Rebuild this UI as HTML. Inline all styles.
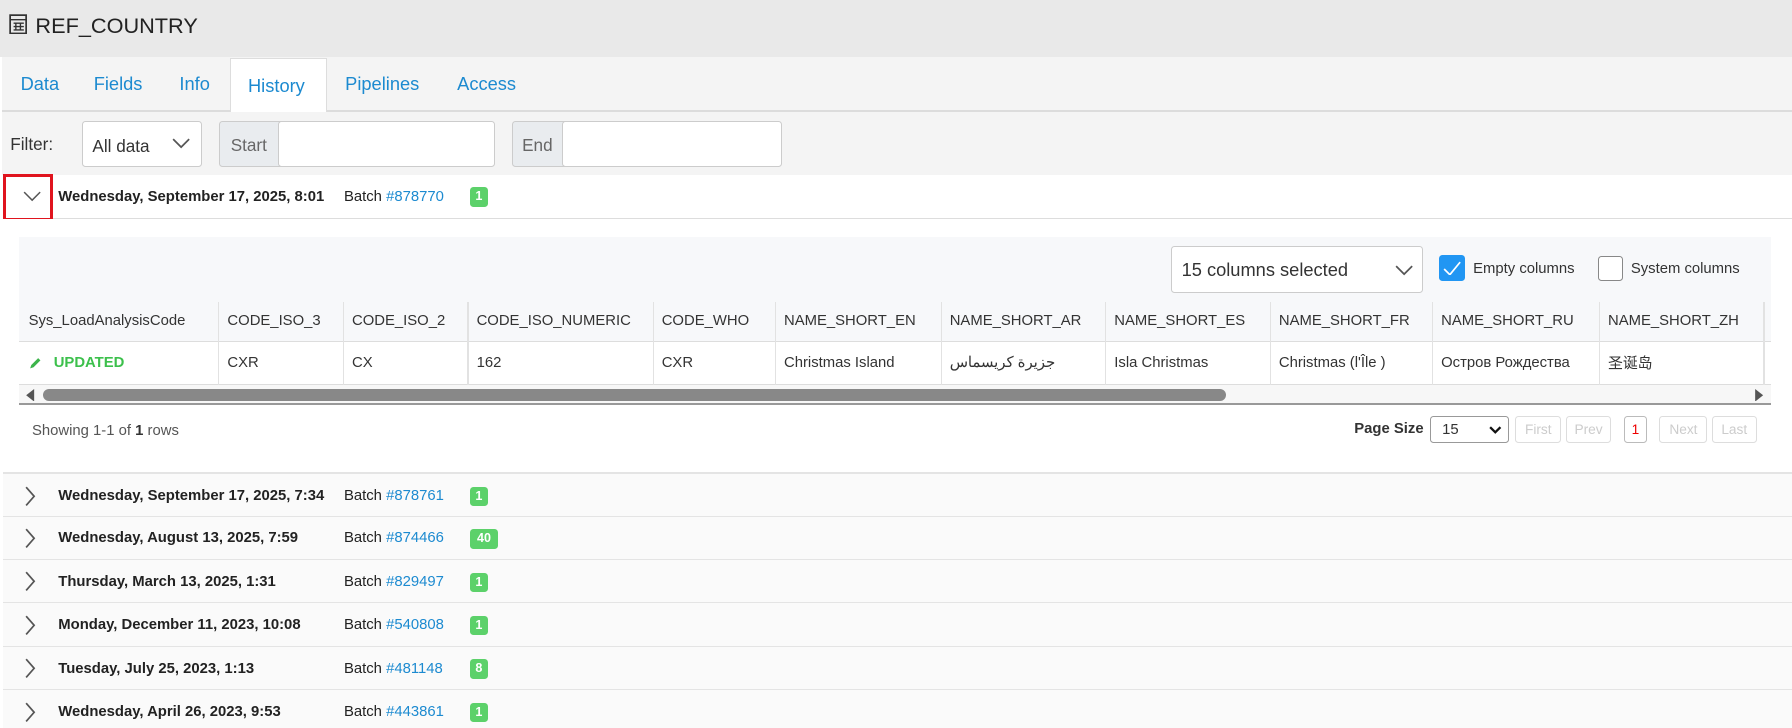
<!DOCTYPE html>
<html><head><meta charset="utf-8"><style>
*{box-sizing:border-box;margin:0;padding:0}
html,body{width:1792px;height:728px;overflow:hidden;background:#fff}
#w{zoom:1.142857;width:1568px;height:637px;position:relative;font-family:"Liberation Sans","Noto Sans CJK SC",sans-serif;color:#333;font-size:13px}
.a{position:absolute}
.tab{position:absolute;top:64px;font-size:16px;color:#1c8ad0}
.box{position:absolute;border:1px solid #ccc;border-radius:3px;background:#fff}
.th,.td{position:absolute;font-size:13px;color:#333;white-space:nowrap}
.vl{position:absolute;width:1px;background:#e2e2e2}
.row{position:absolute;left:3px;width:1565px;height:38px;background:#fafafa;border-bottom:1px solid #e4e4e4}
.row .d{position:absolute;left:48px;top:12px;font-weight:bold;font-size:13px;color:#222}
.row .b{position:absolute;left:298px;top:12px;font-size:13px;color:#222}
.b span{color:#1c8ad0}
.badge{position:absolute;top:11px;height:17px;background:#5cd16a;color:#fff;font-weight:bold;font-size:11px;border-radius:3px;text-align:center;line-height:17px}
.pb{position:absolute;top:364px;height:24px;border:1px solid #ddd;border-radius:3px;color:#ccc;font-size:12px;line-height:22px;text-align:center}
</style></head><body><div id="w">
<div class="a" style="left:0;top:0;width:1568px;height:50px;background:#e9e9e9"></div>
<svg class="a" style="left:8px;top:12px" width="17" height="18" viewBox="0 0 17 18"><rect x="1" y="1" width="14" height="16" fill="none" stroke="#333" stroke-width="1.5"/><path d="M1 5h14M4 8h9M4 11h9M4 14h9M6 8v6M10 8v6" stroke="#333" stroke-width="1.2"/></svg>
<div class="a" style="left:31px;top:11px;font-size:19px;color:#222">REF_COUNTRY</div>
<div class="a" style="left:2px;top:50px;width:1566px;height:103px;background:#f4f4f4"></div>
<div class="a" style="left:2px;top:96px;width:1566px;height:2px;background:#dcdcdc"></div>
<div class="a" style="left:201px;top:51px;width:85px;height:47px;background:#fff;border:1px solid #ddd;border-bottom:none"></div>
<div class="tab" style="left:18px">Data</div><div class="tab" style="left:82px">Fields</div><div class="tab" style="left:157px">Info</div>
<div class="tab" style="left:217px;top:66px">History</div><div class="tab" style="left:302px">Pipelines</div><div class="tab" style="left:400px">Access</div>
<div class="a" style="left:9px;top:117px;font-size:15px;color:#333">Filter:</div>
<div class="box" style="left:72px;top:106px;width:105px;height:40px"><span class="a" style="left:8px;top:12px;font-size:15px">All data</span><svg class="a" style="left:78px;top:14px" width="16" height="10"><path d="M1 1l7 7 7-7" fill="none" stroke="#555" stroke-width="1.5"/></svg></div>
<div class="box" style="left:192px;top:106px;width:240px;height:40px;background:#e9ecef"><span class="a" style="left:9px;top:11px;font-size:15px;color:#666">Start</span><div class="box" style="left:50px;top:-1px;width:190px;height:40px"></div></div>
<div class="box" style="left:448px;top:106px;width:235px;height:40px;background:#e9ecef"><span class="a" style="left:8px;top:11px;font-size:15px;color:#666">End</span><div class="box" style="left:43px;top:-1px;width:192px;height:40px"></div></div>
<div class="a" style="left:3px;top:153px;width:1565px;height:39px;background:#fff;border-bottom:1px solid #ddd"></div>
<div class="a" style="left:3px;top:152px;width:43px;height:41px;border:3px solid #e0141e"></div>
<svg class="a" style="left:20px;top:167px" width="16" height="10"><path d="M1 1l7 7 7-7" fill="none" stroke="#555" stroke-width="1.3"/></svg>
<div class="a" style="left:51px;top:165px;font-weight:bold;color:#222">Wednesday, September 17, 2025, 8:01</div>
<div class="a" style="left:301px;top:165px;color:#222">Batch <span style="color:#1c8ad0">#878770</span></div>
<div class="badge" style="left:411px;top:164px;width:16px">1</div>
<div class="a" style="left:3px;top:192px;width:1565px;height:222px;background:#fff;border-bottom:1px solid #e4e4e4"></div>
<div class="a" style="left:17px;top:207px;width:1533px;height:92px;background:#f7f8fa;border-bottom:1px solid #ddd"></div>
<div class="box" style="left:1025px;top:215px;width:220px;height:41px"><span class="a" style="left:8px;top:11px;font-size:16px;color:#333">15 columns selected</span><svg class="a" style="left:195px;top:16px" width="16" height="10"><path d="M1 1l7 7 7-7" fill="none" stroke="#555" stroke-width="1.5"/></svg></div>
<div class="a" style="left:1259px;top:223px;width:23px;height:23px;background:#2196f3;border-radius:3px"></div>
<svg class="a" style="left:1263px;top:228px" width="16" height="13"><path d="M1 7l5 5 9-11" fill="none" stroke="#fff" stroke-width="1.5"/></svg>
<div class="a" style="left:1289px;top:228px;font-size:13px">Empty columns</div>
<div class="a" style="left:1398px;top:224px;width:22px;height:22px;border:1px solid #888;border-radius:3px;background:#fff"></div>
<div class="a" style="left:1427px;top:228px;font-size:13px">System columns</div>
<div class="a" style="left:17px;top:299px;width:1533px;height:38px;border-bottom:1px solid #ddd"></div>
<div class="vl" style="left:191px;top:264px;height:73px"></div><div class="vl" style="left:300px;top:264px;height:73px"></div><div class="vl" style="left:409px;top:264px;height:73px"></div><div class="vl" style="left:571px;top:264px;height:73px"></div><div class="vl" style="left:678px;top:264px;height:73px"></div><div class="vl" style="left:823px;top:264px;height:73px"></div><div class="vl" style="left:967px;top:264px;height:73px"></div><div class="vl" style="left:1111px;top:264px;height:73px"></div><div class="vl" style="left:1253px;top:264px;height:73px"></div><div class="vl" style="left:1399px;top:264px;height:73px"></div><div class="vl" style="left:1543px;top:264px;height:73px"></div>
<div class="th" style="left:25px;top:274px">Sys_LoadAnalysisCode</div><div class="th" style="left:199px;top:274px">CODE_ISO_3</div><div class="th" style="left:308px;top:274px">CODE_ISO_2</div><div class="th" style="left:417px;top:274px">CODE_ISO_NUMERIC</div><div class="th" style="left:579px;top:274px">CODE_WHO</div><div class="th" style="left:686px;top:274px">NAME_SHORT_EN</div><div class="th" style="left:831px;top:274px">NAME_SHORT_AR</div><div class="th" style="left:975px;top:274px">NAME_SHORT_ES</div><div class="th" style="left:1119px;top:274px">NAME_SHORT_FR</div><div class="th" style="left:1261px;top:274px">NAME_SHORT_RU</div><div class="th" style="left:1407px;top:274px">NAME_SHORT_ZH</div>
<svg class="a" style="left:25px;top:312px" width="11" height="11"><path d="M1 10l1-3 6-6 2 2-6 6z" fill="#3cb44b"/></svg>
<div class="td" style="left:47px;top:311px;color:#3cc04c;font-weight:bold">UPDATED</div>
<div class="td" style="left:199px;top:311px">CXR</div><div class="td" style="left:308px;top:311px">CX</div><div class="td" style="left:417px;top:311px">162</div><div class="td" style="left:579px;top:311px">CXR</div><div class="td" style="left:686px;top:311px">Christmas Island</div><div class="td" style="left:831px;top:309px">جزيرة كريسماس</div><div class="td" style="left:975px;top:311px">Isla Christmas</div><div class="td" style="left:1119px;top:311px">Christmas (l'Île )</div><div class="td" style="left:1261px;top:311px">Остров Рождества</div><div class="td" style="left:1407px;top:308px">圣诞岛</div>
<div class="a" style="left:17px;top:337px;width:1533px;height:17px;background:#f7f7f7;border-bottom:2px solid #999"></div>
<svg class="a" style="left:22px;top:340px" width="10" height="11"><path d="M8 0v11L1 5.5z" fill="#555"/></svg>
<svg class="a" style="left:1535px;top:340px" width="10" height="11"><path d="M1 0v11l7-5.5z" fill="#555"/></svg>
<div class="a" style="left:38px;top:340px;width:1035px;height:11px;background:#888;border-radius:6px"></div>
<div class="a" style="left:28px;top:370px;font-size:13px;color:#555">Showing 1-1 of <b style="color:#333">1</b> rows</div>
<div class="a" style="left:1185px;top:368px;font-weight:bold;color:#333">Page Size</div>
<div class="box" style="left:1251px;top:364px;width:69px;height:24px;border-color:#999"><span class="a" style="left:10px;top:4px">15</span><svg class="a" style="left:51px;top:8px" width="11" height="8"><path d="M1 1l4.5 4.5L10 1" fill="none" stroke="#111" stroke-width="2"/></svg></div>
<div class="pb" style="left:1326px;width:40px">First</div><div class="pb" style="left:1370px;width:40px">Prev</div><div class="pb" style="left:1421px;width:20px;color:#e00;border-color:#bbb">1</div><div class="pb" style="left:1452px;width:42px">Next</div><div class="pb" style="left:1498px;width:39px">Last</div>
<div class="row" style="top:414px;border-top:1px solid #e4e4e4"><svg class="a" style="left:19px;top:10px" width="10" height="18"><path d="M1 1l7 8-7 8" fill="none" stroke="#555" stroke-width="1.5"/></svg><div class="d">Wednesday, September 17, 2025, 7:34</div><div class="b">Batch <span>#878761</span></div><div class="badge" style="left:408px;width:16px">1</div></div>
<div class="row" style="top:452px"><svg class="a" style="left:19px;top:10px" width="10" height="18"><path d="M1 1l7 8-7 8" fill="none" stroke="#555" stroke-width="1.5"/></svg><div class="d">Wednesday, August 13, 2025, 7:59</div><div class="b">Batch <span>#874466</span></div><div class="badge" style="left:408px;width:25px">40</div></div>
<div class="row" style="top:490px"><svg class="a" style="left:19px;top:10px" width="10" height="18"><path d="M1 1l7 8-7 8" fill="none" stroke="#555" stroke-width="1.5"/></svg><div class="d">Thursday, March 13, 2025, 1:31</div><div class="b">Batch <span>#829497</span></div><div class="badge" style="left:408px;width:16px">1</div></div>
<div class="row" style="top:528px"><svg class="a" style="left:19px;top:10px" width="10" height="18"><path d="M1 1l7 8-7 8" fill="none" stroke="#555" stroke-width="1.5"/></svg><div class="d">Monday, December 11, 2023, 10:08</div><div class="b">Batch <span>#540808</span></div><div class="badge" style="left:408px;width:16px">1</div></div>
<div class="row" style="top:566px"><svg class="a" style="left:19px;top:10px" width="10" height="18"><path d="M1 1l7 8-7 8" fill="none" stroke="#555" stroke-width="1.5"/></svg><div class="d">Tuesday, July 25, 2023, 1:13</div><div class="b">Batch <span>#481148</span></div><div class="badge" style="left:408px;width:16px">8</div></div>
<div class="row" style="top:604px"><svg class="a" style="left:19px;top:10px" width="10" height="18"><path d="M1 1l7 8-7 8" fill="none" stroke="#555" stroke-width="1.5"/></svg><div class="d">Wednesday, April 26, 2023, 9:53</div><div class="b">Batch <span>#443861</span></div><div class="badge" style="left:408px;width:16px">1</div></div>
</div></body></html>
